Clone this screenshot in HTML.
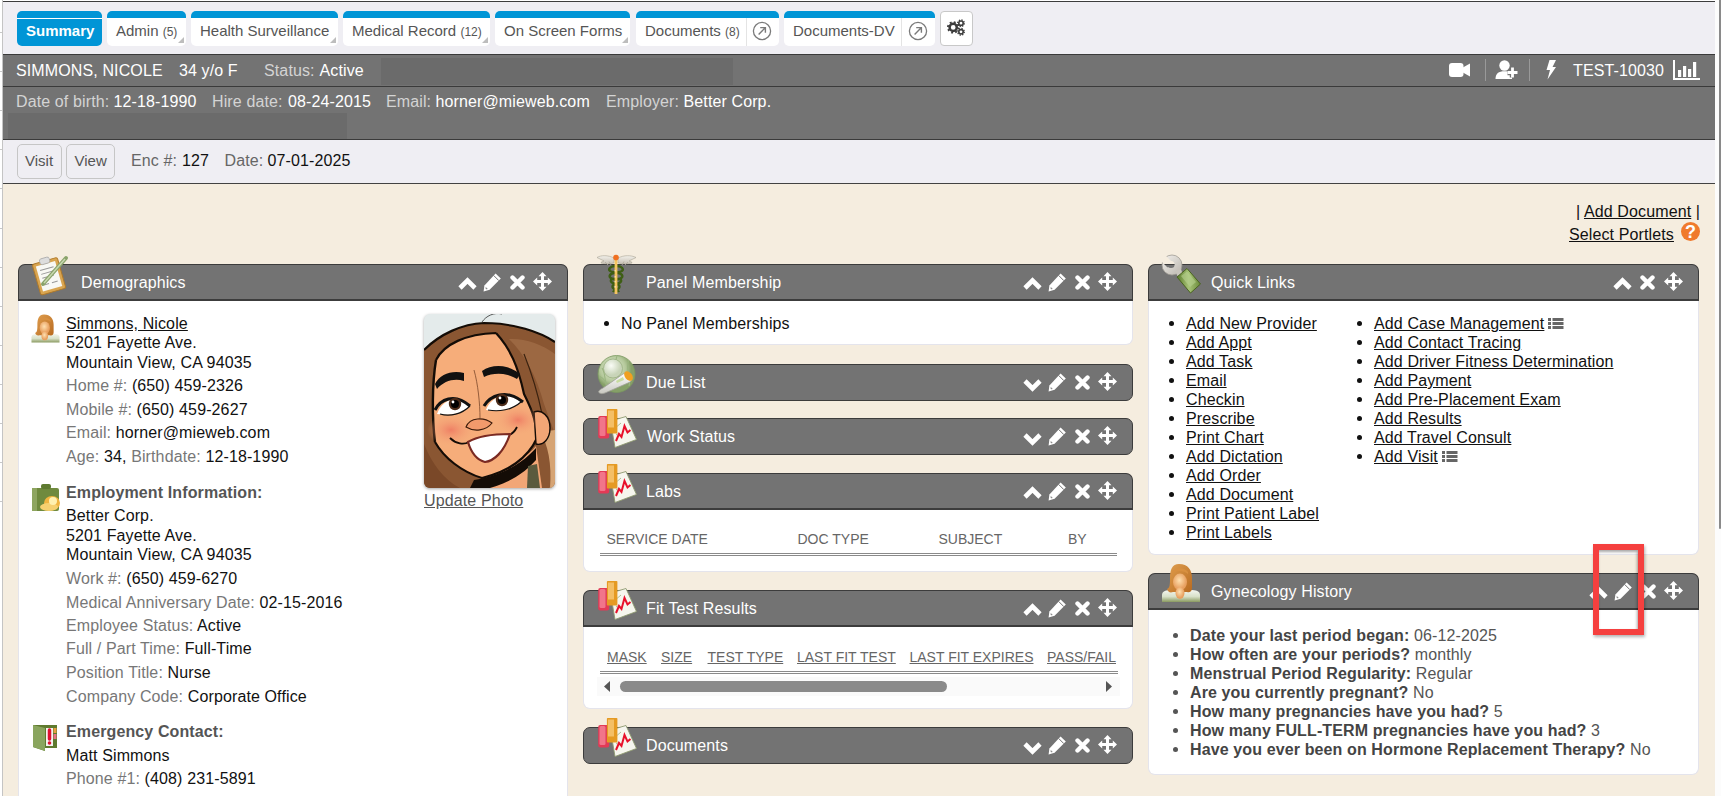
<!DOCTYPE html>
<html><head><meta charset="utf-8"><style>
*{box-sizing:border-box;margin:0;padding:0}
html,body{width:1721px;height:796px;overflow:hidden;background:#fff;font-family:"Liberation Sans",sans-serif;font-size:16px;color:#111}
.abs{position:absolute}
.t{position:absolute;white-space:nowrap;font-size:16px;line-height:18px;letter-spacing:0.12px}
.t15{position:absolute;white-space:nowrap;font-size:15px;line-height:18px}
.t14{position:absolute;white-space:nowrap;font-size:14px;line-height:18px}
u{text-decoration:underline}
.tab{position:absolute;top:11px;height:35px;background:#fff;border-radius:5px;border-top:7px solid #0095d6}
.tab.sel{background:#0095d6}
.tri{position:absolute;width:0;height:0;border-left:6px solid transparent;border-bottom:6px solid #bdbdbd}
.ph{position:absolute;height:37px;background:#737373;border:1px solid #3c3c3c;border-bottom:2px solid #3c3c3c;border-radius:7px 7px 0 0}
.ph.closed{border-radius:7px;border-bottom-width:1px}
.pb{position:absolute;background:#fff;border-radius:0 0 7px 7px;border:1px solid #e4e4ec;border-top:none}
.w{color:#fff}
.lg{color:#d0d0d0}
.lb{color:#777}
.hd{color:#555;font-weight:bold}
.bul{position:absolute;width:5px;height:5px;border-radius:50%;background:#111}
</style></head><body>
<svg width="0" height="0" style="position:absolute">
<defs>
<symbol id="i-up" viewBox="0 0 19 13"><path d="M2 11 L9.5 3.5 L17 11" fill="none" stroke="#fff" stroke-width="4.6" stroke-linejoin="miter"/></symbol>
<symbol id="i-down" viewBox="0 0 19 13"><path d="M2 2 L9.5 9.5 L17 2" fill="none" stroke="#fff" stroke-width="4.6" stroke-linejoin="miter"/></symbol>
<symbol id="i-x" viewBox="0 0 15 15"><path d="M2.5 2.5 L12.5 12.5 M12.5 2.5 L2.5 12.5" fill="none" stroke="#fff" stroke-width="4.4" stroke-linecap="round"/></symbol>
<symbol id="i-move" viewBox="0 0 19 19"><path d="M9.5 0 L13.5 4.2 L11 4.2 L11 8 L14.8 8 L14.8 5.5 L19 9.5 L14.8 13.5 L14.8 11 L11 11 L11 14.8 L13.5 14.8 L9.5 19 L5.5 14.8 L8 14.8 L8 11 L4.2 11 L4.2 13.5 L0 9.5 L4.2 5.5 L4.2 8 L8 8 L8 4.2 L5.5 4.2 Z" fill="#fff"/></symbol>
<symbol id="i-pen" viewBox="0 0 18 19"><path d="M12.6 0.4 L17.8 5.6 L6.6 16.8 L0.6 18.6 L1.4 12.4 Z" fill="#fff"/><path d="M10.6 2.4 L15.8 7.6" stroke="#737373" stroke-width="1"/><path d="M2.6 14.6 L4.2 16.2" stroke="#888" stroke-width="1.2"/></symbol>
<symbol id="i-chart" viewBox="0 0 40 40">
 <path d="M13.5 12 L29 7.5 L39.5 30.5 L18 38.5 Z" fill="#f6f6ee" stroke="#8f9a70" stroke-width="0.9"/>
 <path d="M17 20 L24 14 M19 26 L22 24" stroke="#9ab080" stroke-width="0.8"/>
 <path d="M19 32 L22 25 L24.5 28 L27.5 17 L30.5 23.5 L33.5 21" fill="none" stroke="#e8102a" stroke-width="2"/>
 <rect x="1.2" y="7" width="11" height="22.5" rx="2" fill="#e33a56"/>
 <rect x="2.5" y="8" width="6" height="19" rx="1.5" fill="#f58a9c" opacity=".75"/>
 <rect x="9.9" y="0" width="10.5" height="24.5" rx="0.8" fill="#e59a22"/>
 <rect x="11" y="1.5" width="6" height="17" fill="#f8c878" opacity=".8"/>
</symbol>
</defs></svg>
<div class="abs" style="left:2px;top:0px;width:1px;height:796px;background:#c4c4c4"></div>
<div class="abs" style="left:3px;top:1px;width:1712px;height:1px;background:#3d3d3d"></div>
<div class="abs" style="left:1715px;top:0px;width:6px;height:796px;background:#fcfcfc"></div>
<div class="abs" style="left:1719px;top:0px;width:2px;height:529px;background:#8a8a8a;border-radius:0 0 1px 1px"></div>
<div class="abs" style="left:3px;top:2px;width:1712px;height:52px;background:#efeef3"></div>
<div class="abs" style="left:0px;top:32px;width:2px;height:1px;background:#c8c8c8"></div>
<div class="abs" style="left:0px;top:71px;width:2px;height:1px;background:#c8c8c8"></div>
<div class="abs" style="left:0px;top:110px;width:2px;height:1px;background:#c8c8c8"></div>
<div class="abs" style="left:0px;top:149px;width:2px;height:1px;background:#c8c8c8"></div>
<div class="abs" style="left:0px;top:188px;width:2px;height:1px;background:#c8c8c8"></div>
<div class="abs" style="left:0px;top:228px;width:2px;height:1px;background:#c8c8c8"></div>
<div class="abs" style="left:0px;top:267px;width:2px;height:1px;background:#c8c8c8"></div>
<div class="abs" style="left:0px;top:306px;width:2px;height:1px;background:#c8c8c8"></div>
<div class="abs" style="left:0px;top:345px;width:2px;height:1px;background:#c8c8c8"></div>
<div class="abs" style="left:0px;top:384px;width:2px;height:1px;background:#c8c8c8"></div>
<div class="abs" style="left:0px;top:423px;width:2px;height:1px;background:#c8c8c8"></div>
<div class="abs" style="left:0px;top:462px;width:2px;height:1px;background:#c8c8c8"></div>
<div class="abs" style="left:0px;top:501px;width:2px;height:1px;background:#c8c8c8"></div>
<div class="tab sel" style="left:17px;width:85px">
<div class="abs" style="left:0;top:0;width:100%;height:1px;background:#fff"></div>
</div>
<div class="tab" style="left:107px;width:79px">
<i class="tri" style="right:2px;bottom:3px"></i>
</div>
<div class="tab" style="left:191px;width:147px">
<i class="tri" style="right:2px;bottom:3px"></i>
</div>
<div class="tab" style="left:343px;width:147px">
<i class="tri" style="right:2px;bottom:3px"></i>
</div>
<div class="tab" style="left:495px;width:135px">
<i class="tri" style="right:2px;bottom:3px"></i>
</div>
<div class="tab" style="left:636px;width:143px">
</div>
<div class="tab" style="left:784px;width:151px">
</div>
<div class="t15" style="left:26px;top:22px;color:#fff"><b>Summary</b></div>
<div class="t15" style="left:116px;top:22px;color:#555">Admin <span style="font-size:12px">(5)</span></div>
<div class="t15" style="left:200px;top:22px;color:#555">Health Surveillance</div>
<div class="t15" style="left:352px;top:22px;color:#555">Medical Record <span style="font-size:12px">(12)</span></div>
<div class="t15" style="left:504px;top:22px;color:#555">On Screen Forms</div>
<div class="t15" style="left:645px;top:22px;color:#555">Documents <span style="font-size:12px">(8)</span></div>
<div class="t15" style="left:793px;top:22px;color:#555">Documents-DV</div>
<div class="abs" style="left:746px;top:18px;width:1px;height:28px;background:#e4e4e4"></div>
<svg class="abs" style="left:752px;top:21px" width="20" height="20" viewBox="0 0 20 20"><circle cx="10" cy="10" r="8.6" fill="none" stroke="#7a7a7a" stroke-width="1.3"/><path d="M6.6 13.4 L13.2 6.8 M8.2 6.6 L13.4 6.6 L13.4 11.8" fill="none" stroke="#7a7a7a" stroke-width="1.4"/></svg>
<div class="abs" style="left:901px;top:18px;width:1px;height:28px;background:#e4e4e4"></div>
<svg class="abs" style="left:907.5px;top:21px" width="20" height="20" viewBox="0 0 20 20"><circle cx="10" cy="10" r="8.6" fill="none" stroke="#7a7a7a" stroke-width="1.3"/><path d="M6.6 13.4 L13.2 6.8 M8.2 6.6 L13.4 6.6 L13.4 11.8" fill="none" stroke="#7a7a7a" stroke-width="1.4"/></svg>
<div class="abs" style="left:940px;top:11px;width:33px;height:35px;background:#fff;border:1px solid #c8c8c8;border-radius:4px"><svg class="abs" style="left:4px;top:7px" width="22" height="20" viewBox="0 0 22 20"><g fill="none" stroke="#3c3c3c"><circle cx="8.2" cy="8.4" r="3.6" stroke-width="2.5"/><circle cx="8.2" cy="8.4" r="5.3" stroke-width="1.8" stroke-dasharray="1.9 2.26"/><circle cx="16" cy="4.2" r="2.2" stroke-width="1.6"/><circle cx="16" cy="4.2" r="3.3" stroke-width="1.3" stroke-dasharray="1.3 1.29"/><circle cx="16" cy="12.8" r="2.2" stroke-width="1.6"/><circle cx="16" cy="12.8" r="3.3" stroke-width="1.3" stroke-dasharray="1.3 1.29"/></g></svg>
</div>
<div class="abs" style="left:3px;top:54px;width:1712px;height:86px;background:#737373;border-top:1px solid #3a3a3a;border-bottom:1px solid #3a3a3a"></div>
<div class="abs" style="left:3px;top:86px;width:1712px;height:1px;background:#3a3a3a"></div>
<div class="abs" style="left:381px;top:58px;width:352px;height:27px;background:#6b6b6b"></div>
<div class="abs" style="left:8px;top:113px;width:339px;height:26px;background:#6b6b6b"></div>
<div class="t" style="left:16px;top:62px;color:#fff">SIMMONS, NICOLE</div>
<div class="t" style="left:179px;top:62px;color:#fff">34 y/o F</div>
<div class="t" style="left:264px;top:62px;color:#d4d4d4">Status:</div>
<div class="t" style="left:319.5px;top:62px;color:#fff">Active</div>
<div class="t" style="left:1573px;top:62px;color:#fff">TEST-10030</div>
<div class="t" style="left:16px;top:93px;color:#d4d4d4">Date of birth:</div>
<div class="t" style="left:113.5px;top:93px;color:#fff">12-18-1990</div>
<div class="t" style="left:212px;top:93px;color:#d4d4d4">Hire date:</div>
<div class="t" style="left:288px;top:93px;color:#fff">08-24-2015</div>
<div class="t" style="left:386px;top:93px;color:#d4d4d4">Email:</div>
<div class="t" style="left:435.5px;top:93px;color:#fff">horner@mieweb.com</div>
<div class="t" style="left:606px;top:93px;color:#d4d4d4">Employer:</div>
<div class="t" style="left:683.5px;top:93px;color:#fff">Better Corp.</div>
<div class="abs" style="left:3px;top:54px"><svg class="abs" style="left:1446px;top:9px" width="22" height="14" viewBox="0 0 22 14"><rect x="0" y="0" width="14.5" height="14" rx="3" fill="#fff"/><path d="M13 5 L21 0.5 L21 13.5 L13 9 Z" fill="#fff"/></svg>
  <div class="abs" style="left:1482px;top:5px;width:1px;height:22px;background:#999"></div>
  <svg class="abs" style="left:1492px;top:6px" width="26" height="20" viewBox="0 0 26 20"><circle cx="9.5" cy="5.5" r="5.2" fill="#fff"/><path d="M0.5 19 C0.5 13.5 3.5 11.2 9.5 11.2 C14 11.2 16 12.3 17 13.5 L17 19 Z" fill="#fff"/><path d="M11.5 8 h12 v12 h-12z" fill="#737373" opacity="0"/><path d="M17.5 7.5 L17.5 17.5 M12.5 12.5 L22.5 12.5" stroke="#737373" stroke-width="5.5"/><path d="M17.5 7.5 L17.5 17.5 M12.5 12.5 L22.5 12.5" stroke="#fff" stroke-width="2.8"/></svg>
  <div class="abs" style="left:1526px;top:5px;width:1px;height:22px;background:#999"></div>
  <svg class="abs" style="left:1542px;top:6px" width="12" height="20" viewBox="0 0 12 20"><path d="M4.5 0 L11 0 L7.5 7 L11 7 L2.5 19.5 L5 10 L1.5 10 Z" fill="#fff"/></svg>
  <svg class="abs" style="left:1670px;top:6px" width="28" height="20" viewBox="0 0 28 20"><path d="M1 0 L1 19 L27 19" fill="none" stroke="#fff" stroke-width="2"/><rect x="5" y="10" width="3.2" height="7" fill="#fff"/><rect x="10" y="6" width="3.2" height="11" fill="#fff"/><rect x="15" y="9" width="3.2" height="8" fill="#fff"/><rect x="20" y="2" width="3.2" height="15" fill="#fff"/></svg></div>
<div class="abs" style="left:3px;top:140px;width:1712px;height:44px;background:#efeef3;border-bottom:1px solid #424242"></div>
<div class="abs" style="left:17px;top:144px;width:45px;height:35px;border:1px solid #c6c6c6;border-radius:5px"></div>
<div class="abs" style="left:66px;top:144px;width:49px;height:35px;border:1px solid #c6c6c6;border-radius:5px"></div>
<div class="t15" style="left:25px;top:152px;color:#555">Visit</div>
<div class="t15" style="left:74.5px;top:152px;color:#555">View</div>
<div class="t" style="left:131px;top:152px;color:#666">Enc #:</div>
<div class="t" style="left:182px;top:152px;color:#111">127</div>
<div class="t" style="left:224.5px;top:152px;color:#666">Date:</div>
<div class="t" style="left:267.5px;top:152px;color:#111">07-01-2025</div>
<div class="abs" style="left:3px;top:184px;width:1712px;height:612px;background:#f5eddf"></div>
<div class="t" style="left:1576px;top:203px;color:#111">| <u>Add Document</u> |</div>
<div class="t" style="left:1569px;top:226px;color:#111"><u>Select Portlets</u></div>
<svg class="abs" style="left:1681px;top:222px" width="19" height="19" viewBox="0 0 19 19"><circle cx="9.5" cy="9.5" r="9.5" fill="#f07a2c"/><text x="9.6" y="16" text-anchor="middle" font-family="Liberation Sans" font-weight="bold" font-size="18" fill="#fff">?</text></svg>
<div class="pb" style="left:18px;top:301px;width:550px;height:520px"></div>
<div class="ph" style="left:18px;top:264px;width:550px"></div>
<div class="t" style="left:81px;top:274px;color:#fff">Demographics</div>
<svg class="abs" style="left:458px;top:277px" width="19" height="13"><use href="#i-up"/></svg>
<svg class="abs" style="left:483px;top:273px" width="18" height="19"><use href="#i-pen"/></svg>
<svg class="abs" style="left:510px;top:275px" width="15" height="15"><use href="#i-x"/></svg>
<svg class="abs" style="left:533px;top:272px" width="19" height="19"><use href="#i-move"/></svg>
<svg class="abs" style="left:30px;top:252px" width="42" height="44" viewBox="0 0 42 44"><g transform="rotate(-16 20 24)"><rect x="6" y="8" width="26" height="32" rx="2" fill="#d9a550" stroke="#b07a2a" stroke-width="1"/><rect x="9" y="11" width="20" height="26" fill="#f8f8f4"/><path d="M12 16h14M12 20h14M12 24h12M12 31h5M20 31h6" stroke="#999" stroke-width="1"/><rect x="14" y="5" width="10" height="6" rx="2" fill="#ddd" stroke="#aaa" stroke-width=".8"/></g><path d="M13 32 L36 6" stroke="#8aa36a" stroke-width="4" stroke-linecap="round"/><path d="M14 31 L35 7" stroke="#c8d8b0" stroke-width="1.5"/></svg>
<svg class="abs" style="left:30px;top:313px" width="31" height="31" viewBox="0 0 42 42"><defs><linearGradient id="wsh2" x1="0" y1="0" x2="0" y2="1"><stop offset="0" stop-color="#f4f6f0"/><stop offset=".55" stop-color="#d8e0c8"/><stop offset="1" stop-color="#8a9a60"/></linearGradient><linearGradient id="whr2" x1="0" y1="0" x2="1" y2="1"><stop offset="0" stop-color="#e0a050"/><stop offset="1" stop-color="#b86a20"/></linearGradient><radialGradient id="wfc2" cx=".45" cy=".4"><stop offset="0" stop-color="#ffe0b0"/><stop offset="1" stop-color="#e8a060"/></radialGradient></defs>
<path d="M2 33 C2 29 6 28 12 28 L30 28 C36 28 40 29 40 33 L40 40 L2 40 Z" fill="url(#wsh2)"/>
<path d="M19 2 C28 2 32 8 32 16 L32 26 C32 30 29 31 27 30 L13 30 C10 31 8 30 7 27 C10 26 10 22 10 16 C10 8 12 2 19 2 Z" fill="url(#whr2)"/>
<ellipse cx="20" cy="20" rx="7" ry="8.5" fill="url(#wfc2)"/>
<path d="M12 12 C15 8 24 8 28 12 L28 10 C24 5 15 5 12 10Z" fill="#d89040"/>
<ellipse cx="20" cy="31" rx="4.5" ry="6" fill="url(#wfc2)"/>
</svg>

<div class="t" style="left:66px;top:315px"><u>Simmons, Nicole</u></div>
<div class="t" style="left:66px;top:334px">5201 Fayette Ave.</div>
<div class="t" style="left:66px;top:354px">Mountain View, CA 94035</div>
<div class="t" style="left:66px;top:377px"><span class="lb">Home #:</span> (650) 459-2326</div>
<div class="t" style="left:66px;top:401px"><span class="lb">Mobile #:</span> (650) 459-2627</div>
<div class="t" style="left:66px;top:424px"><span class="lb">Email:</span> horner@mieweb.com</div>
<div class="t" style="left:66px;top:448px"><span class="lb">Age:</span> 34, <span class="lb">Birthdate:</span> 12-18-1990</div>
<svg class="abs" style="left:424px;top:314px;filter:drop-shadow(0 1px 1.5px rgba(0,0,0,.35))" width="131" height="174" viewBox="0 0 131 174">
<defs><clipPath id="pc"><rect width="131" height="174" rx="6"/></clipPath>
<radialGradient id="ck"><stop offset="0" stop-color="#ee7a62" stop-opacity=".9"/><stop offset="1" stop-color="#f4a77a" stop-opacity="0"/></radialGradient></defs>
<g clip-path="url(#pc)">
<rect width="131" height="174" fill="#e4ebeb"/>
<path d="M0 36 C16 20 38 10 60 9 C90 9 116 18 131 28 L131 174 L0 174 Z" fill="#8a5632"/>
<path d="M0 36 C16 20 38 10 60 9 C90 9 116 18 131 28" fill="none" stroke="#140c06" stroke-width="2.2"/>
<path d="M58 8 C62 2 70 -2 78 0" fill="none" stroke="#333" stroke-width=".8"/>
<path d="M85 25 C100 40 112 60 120 90 L131 120 L131 40 C118 30 100 24 85 25Z" fill="#9c6842"/>
<path d="M100 40 C108 60 114 80 118 100" fill="none" stroke="#3a2210" stroke-width="1.2"/>
<path d="M116 118 C124 130 128 150 126 174 L131 174 L131 116 Z" fill="#d6a474"/>
<path d="M60 160 C82 156 100 146 112 132 L118 174 L56 174 Z" fill="#f2a676"/>
<path d="M50 166 C76 162 98 150 112 134 L112 146 C100 160 82 170 66 174 L46 174 Z" fill="#140c06"/>
<path d="M104 152 L113 150 L116 174 L103 174 Z" fill="#5a5a3e"/>
<path d="M12 46 C20 30 42 20 72 19 C86 34 94 52 100 80 C106 92 112 104 113 124 C104 144 84 158 58 164 C38 158 20 144 11 128 C8 104 8 70 12 46 Z" fill="#f6ad7a"/>
<path d="M12 46 C20 30 42 20 72 19 M72 19 C86 34 94 52 100 80 C106 92 112 104 113 124 M11 128 C20 144 38 158 58 164 C84 158 104 144 113 124" fill="none" stroke="#140c06" stroke-width="2.2"/>
<path d="M12 46 C8 70 8 104 11 128" fill="none" stroke="#140c06" stroke-width="2.4"/>
<path d="M110 98 C118 95 126 102 126 114 C126 124 120 132 112 130 Z" fill="#f2a676" stroke="#140c06" stroke-width="1.4"/>
<ellipse cx="27" cy="116" rx="24" ry="16" fill="url(#ck)"/>
<ellipse cx="94" cy="106" rx="22" ry="15" fill="url(#ck)"/>
<path d="M11 70 C16 60 28 56 40 59 L40 67 C30 64 20 67 13 75 Z" fill="#111"/>
<path d="M58 57 C68 50 84 50 96 60 L93 65 C84 59 70 58 60 63 Z" fill="#111"/>
<path d="M13 100 C18 86 32 80 46 92 C38 100 26 102 13 100 Z" fill="#fff"/>
<path d="M11 96 C16 86 30 78 46 92" fill="none" stroke="#111" stroke-width="3"/>
<path d="M16 100 C26 103 38 100 46 92" fill="none" stroke="#111" stroke-width="1.2"/>
<circle cx="31" cy="90" r="6.2" fill="#4a2a18"/><circle cx="31" cy="90" r="4" fill="#000"/><circle cx="29" cy="88" r="1.4" fill="#fff"/>
<path d="M62 96 C66 84 82 76 97 88 C88 96 75 98 62 96 Z" fill="#fff"/>
<path d="M60 92 C66 82 82 74 99 88" fill="none" stroke="#111" stroke-width="3"/>
<path d="M64 96 C75 98 88 96 97 88" fill="none" stroke="#111" stroke-width="1.2"/>
<circle cx="78" cy="86" r="6.2" fill="#4a2a18"/><circle cx="78" cy="86" r="4" fill="#000"/><circle cx="76" cy="84" r="1.4" fill="#fff"/>
<path d="M50 56 C54 70 56 90 56 104" fill="none" stroke="#6a3a20" stroke-width=".7"/>
<path d="M42 113 C46 103 60 103 68 109 C62 117 50 118 42 113 Z" fill="#f29a6c" stroke="#3a1a0a" stroke-width="1.1"/>
<path d="M26 124 C32 130 40 131 45 128" fill="none" stroke="#140c06" stroke-width="1.8"/>
<path d="M85 121 C88 120 91 117 93 113" fill="none" stroke="#140c06" stroke-width="1.8"/>
<path d="M44 128 C54 122 72 120 86 120 C80 138 70 147 61 148 C53 146 47 138 44 128 Z" fill="#fff" stroke="#7a2a22" stroke-width="2.2"/>
<path d="M0 130 C8 150 20 166 36 174 L0 174Z" fill="#7a4828"/>
</g></svg>

<div class="t" style="left:424px;top:492px;color:#555"><u>Update Photo</u></div>
<svg class="abs" style="left:31px;top:483px" width="30" height="30" viewBox="0 0 30 30"><rect x="1" y="5" width="27" height="23" rx="2" fill="#6f8a3e"/><rect x="1" y="5" width="5" height="23" fill="#8ea560"/><rect x="10" y="1" width="10" height="5" rx="2" fill="#5e7a30"/><ellipse cx="21" cy="20" rx="8" ry="7" fill="#f0b440"/><ellipse cx="18" cy="24" rx="9" ry="4" fill="#f6d070"/><ellipse cx="22" cy="18" rx="4" ry="4" fill="#fff0b0"/></svg>
<div class="t" style="left:66px;top:484px;color:#555"><b>Employment Information:</b></div>
<div class="t" style="left:66px;top:507px">Better Corp.</div>
<div class="t" style="left:66px;top:527px">5201 Fayette Ave.</div>
<div class="t" style="left:66px;top:546px">Mountain View, CA 94035</div>
<div class="t" style="left:66px;top:570px"><span class="lb">Work #:</span> (650) 459-6270</div>
<div class="t" style="left:66px;top:594px"><span class="lb">Medical Anniversary Date:</span> 02-15-2016</div>
<div class="t" style="left:66px;top:617px"><span class="lb">Employee Status:</span> Active</div>
<div class="t" style="left:66px;top:640px"><span class="lb">Full / Part Time:</span> Full-Time</div>
<div class="t" style="left:66px;top:664px"><span class="lb">Position Title:</span> Nurse</div>
<div class="t" style="left:66px;top:688px"><span class="lb">Company Code:</span> Corporate Office</div>
<svg class="abs" style="left:31px;top:722px" width="30" height="30" viewBox="0 0 30 30"><path d="M2 3 L26 3 L26 26 L14 26 L14 29 L2 25 Z" fill="#5f7a2e"/><path d="M2 3 L14 6 L14 29 L2 25Z" fill="#8aa55e"/><rect x="15" y="6" width="7" height="18" fill="#f4f4f0"/><path d="M18.5 8 L18.5 17" stroke="#e01030" stroke-width="3.5" stroke-linecap="round"/><circle cx="18.5" cy="21" r="1.8" fill="#e01030"/><rect x="22.5" y="6" width="3" height="5" fill="#e8a040"/><rect x="22.5" y="12" width="3" height="5" fill="#e87080"/></svg>
<div class="t" style="left:66px;top:723px;color:#555"><b>Emergency Contact:</b></div>
<div class="t" style="left:66px;top:747px">Matt Simmons</div>
<div class="t" style="left:66px;top:770px"><span class="lb">Phone #1:</span> (408) 231-5891</div>
<div class="pb" style="left:583px;top:301px;width:550px;height:44px"></div>
<div class="ph" style="left:583px;top:264px;width:550px"></div>
<div class="t" style="left:646px;top:274px;color:#fff">Panel Membership</div>
<svg class="abs" style="left:1023px;top:277px" width="19" height="13"><use href="#i-up"/></svg>
<svg class="abs" style="left:1048px;top:273px" width="18" height="19"><use href="#i-pen"/></svg>
<svg class="abs" style="left:1075px;top:275px" width="15" height="15"><use href="#i-x"/></svg>
<svg class="abs" style="left:1098px;top:272px" width="19" height="19"><use href="#i-move"/></svg>
<svg class="abs" style="left:592px;top:250px" width="50" height="50" viewBox="0 0 50 50"><defs><linearGradient id="cw" x1="0" y1="0" x2="0" y2="1"><stop offset="0" stop-color="#f2f0ea"/><stop offset="1" stop-color="#c8c2b6"/></linearGradient></defs>
<path d="M22 8 C16 5 9 5 5 7.5 C8 9 10 10 12 11 C10 11.5 9 12 9 13 C13 14 18 14 22 13 Z" fill="url(#cw)" stroke="#aaa496" stroke-width=".6"/>
<path d="M26 8 C32 5 39 5 44 7.5 C41 9 39 10 37 11 C39 11.5 40 12 40 13 C36 14 31 14 26 13 Z" fill="url(#cw)" stroke="#aaa496" stroke-width=".6"/>
<path d="M13 12 L16 15 M17 11.5 L19 15 M36 12 L33 15 M32 11.5 L30 15" stroke="#b0aa9c" stroke-width=".8"/>
<g fill="none" stroke="#3e5e14" stroke-width="2.4">
<path d="M24 16 C18 16 16 19 18 21 C20 23 28 22 30 25 C32 28 26 30 22 29 C18 28.5 18 32 21 33 C25 34 29 35 27 38 C26 40 22 40 21 42"/>
<path d="M24 16 C30 16 32 19 30 21 C28 23 20 22 18 25 C16 28 22 30 26 29 C30 28.5 30 32 27 33 C23 34 19 35 21 38 C22 40 26 40 27 42"/>
</g>
<rect x="22.6" y="7" width="2.8" height="37" fill="#f4c560"/>
<path d="M23.2 20 v1.5 M23.2 26 v1.5 M23.2 31 v1.5 M23.2 36 v1.5" stroke="#fff0b0" stroke-width="1"/>
<circle cx="24" cy="7.5" r="2.8" fill="#f07020"/>
</svg>

<div class="bul" style="left:604px;top:321px"></div>
<div class="t" style="left:621px;top:315px">No Panel Memberships</div>
<div class="ph closed" style="left:583px;top:364px;width:550px"></div>
<div class="t" style="left:646px;top:374px;color:#fff">Due List</div>
<svg class="abs" style="left:1023px;top:379px" width="19" height="13"><use href="#i-down"/></svg>
<svg class="abs" style="left:1048px;top:373px" width="18" height="19"><use href="#i-pen"/></svg>
<svg class="abs" style="left:1075px;top:375px" width="15" height="15"><use href="#i-x"/></svg>
<svg class="abs" style="left:1098px;top:372px" width="19" height="19"><use href="#i-move"/></svg>
<svg class="abs" style="left:596px;top:354px" width="42" height="42" viewBox="0 0 42 42"><defs><radialGradient id="dg" cx=".4" cy=".35"><stop offset="0" stop-color="#e8f0dc"/><stop offset=".7" stop-color="#b4c89a"/><stop offset="1" stop-color="#86a068"/></radialGradient><radialGradient id="dg2" cx=".4" cy=".35"><stop offset="0" stop-color="#fafcf6"/><stop offset="1" stop-color="#c8d4b8"/></radialGradient><linearGradient id="tg" x1="0" y1="0" x2="0" y2="1"><stop offset="0" stop-color="#ffffff"/><stop offset="1" stop-color="#c8c8c0"/></linearGradient></defs>
<circle cx="20.5" cy="20" r="18.5" fill="url(#dg)" stroke="#7a9860" stroke-width=".8"/>
<path d="M6 14 C10 20 8 28 12 34 M33 6 C28 14 36 22 33 32 M21 2 C17 10 26 15 22 24 M3 22 C8 24 12 30 10 38" stroke="#9ab580" stroke-width="1.1" fill="none"/>
<circle cx="17" cy="14.5" r="9.5" fill="url(#dg2)" stroke="#9ab080" stroke-width=".8"/>
<path d="M2.5 38 C3 36 5 35 7 34 L27 20 C30 18 34 19 35.5 22 C37 25 35 28 32 29 L9 39 C6 40 4 40 2.5 38Z" fill="url(#tg)" stroke="#a0a098" stroke-width=".8"/>
<ellipse cx="32.5" cy="22" rx="3.6" ry="5.4" transform="rotate(-38 32.5 22)" fill="#f0a020"/>
<path d="M20 27 L27 23 L28 26 L21 29Z" fill="#c8dca0"/>
</svg>

<div class="ph closed" style="left:583px;top:418px;width:550px"></div>
<div class="t" style="left:647px;top:428px;color:#fff">Work Status</div>
<svg class="abs" style="left:1023px;top:433px" width="19" height="13"><use href="#i-down"/></svg>
<svg class="abs" style="left:1048px;top:427px" width="18" height="19"><use href="#i-pen"/></svg>
<svg class="abs" style="left:1075px;top:429px" width="15" height="15"><use href="#i-x"/></svg>
<svg class="abs" style="left:1098px;top:426px" width="19" height="19"><use href="#i-move"/></svg>
<svg class="abs" style="left:597px;top:409px" width="40" height="40"><use href="#i-chart"/></svg>
<div class="pb" style="left:583px;top:510px;width:550px;height:62px"></div>
<div class="ph" style="left:583px;top:473px;width:550px"></div>
<div class="t" style="left:646px;top:483px;color:#fff">Labs</div>
<svg class="abs" style="left:1023px;top:486px" width="19" height="13"><use href="#i-up"/></svg>
<svg class="abs" style="left:1048px;top:482px" width="18" height="19"><use href="#i-pen"/></svg>
<svg class="abs" style="left:1075px;top:484px" width="15" height="15"><use href="#i-x"/></svg>
<svg class="abs" style="left:1098px;top:481px" width="19" height="19"><use href="#i-move"/></svg>
<svg class="abs" style="left:597px;top:464px" width="40" height="40"><use href="#i-chart"/></svg>
<div class="t14" style="left:606.5px;top:530px;color:#666">SERVICE DATE</div>
<div class="t14" style="left:797.5px;top:530px;color:#666">DOC TYPE</div>
<div class="t14" style="left:938.5px;top:530px;color:#666">SUBJECT</div>
<div class="t14" style="left:1068px;top:530px;color:#666">BY</div>
<div class="abs" style="left:600px;top:553px;width:517px;height:3px;border-top:1px solid #8a8a8a;border-bottom:1px solid #8a8a8a"></div>
<div class="pb" style="left:583px;top:627px;width:550px;height:82px"></div>
<div class="ph" style="left:583px;top:590px;width:550px"></div>
<div class="t" style="left:646px;top:600px;color:#fff">Fit Test Results</div>
<svg class="abs" style="left:1023px;top:603px" width="19" height="13"><use href="#i-up"/></svg>
<svg class="abs" style="left:1048px;top:599px" width="18" height="19"><use href="#i-pen"/></svg>
<svg class="abs" style="left:1075px;top:601px" width="15" height="15"><use href="#i-x"/></svg>
<svg class="abs" style="left:1098px;top:598px" width="19" height="19"><use href="#i-move"/></svg>
<svg class="abs" style="left:597px;top:581px" width="40" height="40"><use href="#i-chart"/></svg>
<div class="t14" style="left:607px;top:648px;color:#666"><u>MASK</u></div>
<div class="t14" style="left:661px;top:648px;color:#666"><u>SIZE</u></div>
<div class="t14" style="left:707.5px;top:648px;color:#666"><u>TEST TYPE</u></div>
<div class="t14" style="left:797px;top:648px;color:#666"><u>LAST FIT TEST</u></div>
<div class="t14" style="left:909.5px;top:648px;color:#666"><u>LAST FIT EXPIRES</u></div>
<div class="t14" style="left:1047px;top:648px;color:#666"><u>PASS/FAIL</u></div>
<div class="abs" style="left:600px;top:671px;width:518px;height:3px;border-top:1px solid #8a8a8a;border-bottom:1px solid #8a8a8a"></div>
<div class="abs" style="left:597px;top:677px;width:523px;height:19px;background:#fafafa"></div>
<div class="abs" style="left:620px;top:681px;width:327px;height:11px;border-radius:6px;background:#8a8a8a"></div>
<svg class="abs" style="left:603px;top:680px" width="8" height="13"><path d="M7 1 L1 6.5 L7 12Z" fill="#555"/></svg><svg class="abs" style="left:1105px;top:680px" width="8" height="13"><path d="M1 1 L7 6.5 L1 12Z" fill="#555"/></svg>
<div class="ph closed" style="left:583px;top:727px;width:550px"></div>
<div class="t" style="left:646px;top:737px;color:#fff">Documents</div>
<svg class="abs" style="left:1023px;top:742px" width="19" height="13"><use href="#i-down"/></svg>
<svg class="abs" style="left:1048px;top:736px" width="18" height="19"><use href="#i-pen"/></svg>
<svg class="abs" style="left:1075px;top:738px" width="15" height="15"><use href="#i-x"/></svg>
<svg class="abs" style="left:1098px;top:735px" width="19" height="19"><use href="#i-move"/></svg>
<svg class="abs" style="left:597px;top:718px" width="40" height="40"><use href="#i-chart"/></svg>
<div class="pb" style="left:1148px;top:301px;width:551px;height:254px"></div>
<div class="ph" style="left:1148px;top:264px;width:551px"></div>
<div class="t" style="left:1211px;top:274px;color:#fff">Quick Links</div>
<svg class="abs" style="left:1613px;top:277px" width="19" height="13"><use href="#i-up"/></svg>
<svg class="abs" style="left:1640px;top:275px" width="15" height="15"><use href="#i-x"/></svg>
<svg class="abs" style="left:1664px;top:272px" width="19" height="19"><use href="#i-move"/></svg>
<svg class="abs" style="left:1150px;top:245px" width="56" height="56" viewBox="0 0 56 56"><defs><mask id="wm"><rect width="56" height="56" fill="#fff"/><path d="M9 4 L22.5 17.5 L17.5 22.5 L4 9 Z" fill="#000"/><circle cx="21" cy="19.5" r="3.6" fill="#000"/></mask><linearGradient id="wg" x1="0" y1="0" x2="1" y2="1"><stop offset="0" stop-color="#f4f2ee"/><stop offset="1" stop-color="#b8b4ac"/></linearGradient><linearGradient id="hg" x1="0" y1="0" x2="1" y2="0"><stop offset="0" stop-color="#5a7a2a"/><stop offset=".5" stop-color="#a8c478"/><stop offset="1" stop-color="#6a8a3a"/></linearGradient></defs><g mask="url(#wm)"><circle cx="22" cy="20" r="10" fill="url(#wg)" stroke="#a09c94" stroke-width=".8"/></g><path d="M25 26 L31 24 L33 30 L28 32Z" fill="#c8c4bc"/><path d="M27 32 L37 23.5 L50.5 39 L40.5 48 Z" fill="url(#hg)" stroke="#4a6420" stroke-width="1"/><path d="M31 31 L37 26.5 L46 37 L40 42 Z" fill="#b8d090" opacity=".6"/></svg>

<div class="bul" style="left:1169px;top:321px"></div>
<div class="t" style="left:1186px;top:315px"><u>Add New Provider</u></div>
<div class="bul" style="left:1169px;top:340px"></div>
<div class="t" style="left:1186px;top:334px"><u>Add Appt</u></div>
<div class="bul" style="left:1169px;top:359px"></div>
<div class="t" style="left:1186px;top:353px"><u>Add Task</u></div>
<div class="bul" style="left:1169px;top:378px"></div>
<div class="t" style="left:1186px;top:372px"><u>Email</u></div>
<div class="bul" style="left:1169px;top:397px"></div>
<div class="t" style="left:1186px;top:391px"><u>Checkin</u></div>
<div class="bul" style="left:1169px;top:416px"></div>
<div class="t" style="left:1186px;top:410px"><u>Prescribe</u></div>
<div class="bul" style="left:1169px;top:435px"></div>
<div class="t" style="left:1186px;top:429px"><u>Print Chart</u></div>
<div class="bul" style="left:1169px;top:454px"></div>
<div class="t" style="left:1186px;top:448px"><u>Add Dictation</u></div>
<div class="bul" style="left:1169px;top:473px"></div>
<div class="t" style="left:1186px;top:467px"><u>Add Order</u></div>
<div class="bul" style="left:1169px;top:492px"></div>
<div class="t" style="left:1186px;top:486px"><u>Add Document</u></div>
<div class="bul" style="left:1169px;top:511px"></div>
<div class="t" style="left:1186px;top:505px"><u>Print Patient Label</u></div>
<div class="bul" style="left:1169px;top:530px"></div>
<div class="t" style="left:1186px;top:524px"><u>Print Labels</u></div>
<div class="bul" style="left:1357px;top:321px"></div>
<div class="t" style="left:1374px;top:315px"><u>Add Case Management</u><svg width="16" height="13" viewBox="0 0 16 13" style="vertical-align:-1px;margin-left:4px"><rect x="0" y="1" width="3" height="3" fill="#666"/><rect x="4.5" y="1" width="11" height="3" fill="#666"/><rect x="0" y="5" width="3" height="3" fill="#666"/><rect x="4.5" y="5" width="11" height="3" fill="#666"/><rect x="0" y="9" width="3" height="3" fill="#666"/><rect x="4.5" y="9" width="11" height="3" fill="#666"/></svg></div>
<div class="bul" style="left:1357px;top:340px"></div>
<div class="t" style="left:1374px;top:334px"><u>Add Contact Tracing</u></div>
<div class="bul" style="left:1357px;top:359px"></div>
<div class="t" style="left:1374px;top:353px"><u>Add Driver Fitness Determination</u></div>
<div class="bul" style="left:1357px;top:378px"></div>
<div class="t" style="left:1374px;top:372px"><u>Add Payment</u></div>
<div class="bul" style="left:1357px;top:397px"></div>
<div class="t" style="left:1374px;top:391px"><u>Add Pre-Placement Exam</u></div>
<div class="bul" style="left:1357px;top:416px"></div>
<div class="t" style="left:1374px;top:410px"><u>Add Results</u></div>
<div class="bul" style="left:1357px;top:435px"></div>
<div class="t" style="left:1374px;top:429px"><u>Add Travel Consult</u></div>
<div class="bul" style="left:1357px;top:454px"></div>
<div class="t" style="left:1374px;top:448px"><u>Add Visit</u><svg width="16" height="13" viewBox="0 0 16 13" style="vertical-align:-1px;margin-left:4px"><rect x="0" y="1" width="3" height="3" fill="#666"/><rect x="4.5" y="1" width="11" height="3" fill="#666"/><rect x="0" y="5" width="3" height="3" fill="#666"/><rect x="4.5" y="5" width="11" height="3" fill="#666"/><rect x="0" y="9" width="3" height="3" fill="#666"/><rect x="4.5" y="9" width="11" height="3" fill="#666"/></svg></div>
<div class="pb" style="left:1148px;top:610px;width:551px;height:165px"></div>
<div class="ph" style="left:1148px;top:573px;width:551px"></div>
<div class="t" style="left:1211px;top:583px;color:#fff">Gynecology History</div>
<svg class="abs" style="left:1589px;top:586px" width="19" height="13"><use href="#i-up"/></svg>
<svg class="abs" style="left:1614px;top:582px" width="18" height="19"><use href="#i-pen"/></svg>
<svg class="abs" style="left:1641px;top:584px" width="15" height="15"><use href="#i-x"/></svg>
<svg class="abs" style="left:1664px;top:581px" width="19" height="19"><use href="#i-move"/></svg>
<svg class="abs" style="left:1160px;top:562px" width="42" height="42" viewBox="0 0 42 42"><defs><linearGradient id="wsh" x1="0" y1="0" x2="0" y2="1"><stop offset="0" stop-color="#f4f6f0"/><stop offset=".55" stop-color="#d8e0c8"/><stop offset="1" stop-color="#8a9a60"/></linearGradient><linearGradient id="whr" x1="0" y1="0" x2="1" y2="1"><stop offset="0" stop-color="#e0a050"/><stop offset="1" stop-color="#b86a20"/></linearGradient><radialGradient id="wfc" cx=".45" cy=".4"><stop offset="0" stop-color="#ffe0b0"/><stop offset="1" stop-color="#e8a060"/></radialGradient></defs>
<path d="M2 33 C2 29 6 28 12 28 L30 28 C36 28 40 29 40 33 L40 40 L2 40 Z" fill="url(#wsh)"/>
<path d="M19 2 C28 2 32 8 32 16 L32 26 C32 30 29 31 27 30 L13 30 C10 31 8 30 7 27 C10 26 10 22 10 16 C10 8 12 2 19 2 Z" fill="url(#whr)"/>
<ellipse cx="20" cy="20" rx="7" ry="8.5" fill="url(#wfc)"/>
<path d="M12 12 C15 8 24 8 28 12 L28 10 C24 5 15 5 12 10Z" fill="#d89040"/>
<ellipse cx="20" cy="31" rx="4.5" ry="6" fill="url(#wfc)"/>
</svg>

<div class="bul" style="left:1173px;top:633px;background:#555"></div>
<div class="t" style="left:1190px;top:627px;color:#555"><b style="color:#444">Date your last period began:</b> 06-12-2025</div>
<div class="bul" style="left:1173px;top:652px;background:#555"></div>
<div class="t" style="left:1190px;top:646px;color:#555"><b style="color:#444">How often are your periods?</b> monthly</div>
<div class="bul" style="left:1173px;top:671px;background:#555"></div>
<div class="t" style="left:1190px;top:665px;color:#555"><b style="color:#444">Menstrual Period Regularity:</b> Regular</div>
<div class="bul" style="left:1173px;top:690px;background:#555"></div>
<div class="t" style="left:1190px;top:684px;color:#555"><b style="color:#444">Are you currently pregnant?</b> No</div>
<div class="bul" style="left:1173px;top:709px;background:#555"></div>
<div class="t" style="left:1190px;top:703px;color:#555"><b style="color:#444">How many pregnancies have you had?</b> 5</div>
<div class="bul" style="left:1173px;top:728px;background:#555"></div>
<div class="t" style="left:1190px;top:722px;color:#555"><b style="color:#444">How many FULL-TERM pregnancies have you had?</b> 3</div>
<div class="bul" style="left:1173px;top:747px;background:#555"></div>
<div class="t" style="left:1190px;top:741px;color:#555"><b style="color:#444">Have you ever been on Hormone Replacement Therapy?</b> No</div>
<div class="abs" style="left:1593px;top:544px;width:51px;height:91px;border:6px solid #f5403f;box-shadow:inset -1px 2px 3px rgba(0,0,0,.35),1px 2px 3px rgba(0,0,0,.3)"></div>
</body></html>
